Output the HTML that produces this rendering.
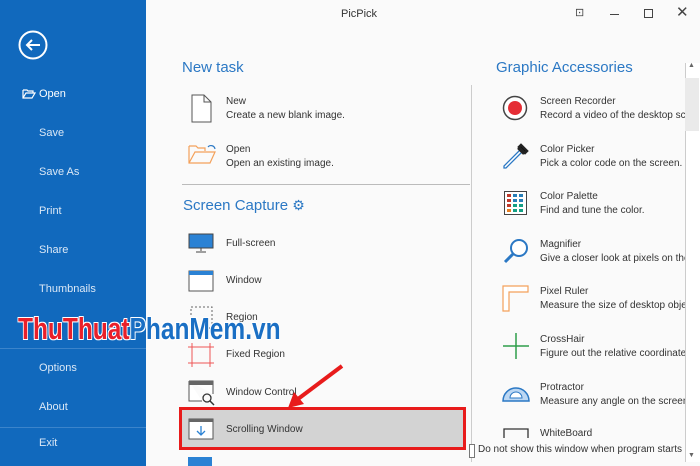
<!DOCTYPE html><html><head><style>
body{margin:0;width:700px;height:466px;overflow:hidden;background:#fafafa;font-family:"Liberation Sans",sans-serif;position:relative}
.a{position:absolute;white-space:nowrap}
.sb{left:0;top:0;width:146px;height:466px;background:#1169bd}
.si{color:#dbe8f6;font-size:11px}
.h{color:#2b78c4;font-size:15px}
.t{font-size:10px;color:#333;line-height:14px}
</style></head><body>
<div class="a sb"></div>
<svg class="a" style="left:18px;top:30px" width="30" height="30"><circle cx="15" cy="15" r="13.5" fill="none" stroke="#fff" stroke-width="2"/><path d="M22 15H9M14 10L9 15L14 20" fill="none" stroke="#fff" stroke-width="2"/></svg>
<svg class="a" style="left:22px;top:88px" width="14" height="11"><path d="M1 2H5L6 3H11V5M1 2V10H10L13 5H4L1 10" fill="none" stroke="#fff" stroke-width="1.2"/></svg>
<div class="a si" style="left:39px;top:88px;color:#fff">Open</div>
<div class="a si" style="left:39px;top:127px">Save</div>
<div class="a si" style="left:39px;top:166px">Save As</div>
<div class="a si" style="left:39px;top:205px">Print</div>
<div class="a si" style="left:39px;top:244px">Share</div>
<div class="a si" style="left:39px;top:283px">Thumbnails</div>
<div class="a" style="left:0;top:348px;width:146px;height:1px;background:#3b84cb"></div>
<div class="a si" style="left:39px;top:362px">Options</div>
<div class="a si" style="left:39px;top:401px">About</div>
<div class="a" style="left:0;top:427px;width:146px;height:1px;background:#3b84cb"></div>
<div class="a si" style="left:39px;top:437px">Exit</div>
<div class="a" style="left:341px;top:8px;font-size:11px;color:#333">PicPick</div>
<div class="a" style="left:575px;top:6px;font-size:11px;color:#444">⊡</div>
<div class="a" style="left:610px;top:14px;width:9px;height:1px;background:#444"></div>
<div class="a" style="left:644px;top:9px;width:7px;height:7px;border:1px solid #444"></div>
<div class="a" style="left:676px;top:3px;font-size:15px;color:#444">✕</div>
<div class="a h" style="left:182px;top:59px">New task</div>
<div class="a h" style="left:183px;top:197px">Screen Capture <span style="font-size:14px">⚙</span></div>
<div class="a h" style="left:496px;top:59px">Graphic Accessories</div>
<svg class="a" style="left:190px;top:94px" width="24" height="30"><path d="M2 1H14L21 8V28H2Z M14 1V8H21" fill="#fff" stroke="#555"/></svg>
<div class="a t" style="left:226px;top:95px">New<br>Create a new blank image.</div>
<svg class="a" style="left:188px;top:143px" width="30" height="22"><path d="M1 3H8L10 5H17V8M1 3V20H22L27 9H7L1 20" fill="none" stroke="#f4a15a" stroke-width="1.2"/><path d="M20 4A4 4 0 0 1 27 6" fill="none" stroke="#2b78c4" stroke-width="1.2"/></svg>
<div class="a t" style="left:226px;top:143px">Open<br>Open an existing image.</div>
<div class="a" style="left:182px;top:184px;width:288px;height:1px;background:#bbb"></div>
<div class="a" style="left:471px;top:85px;width:1px;height:377px;background:#ccc"></div>
<svg class="a" style="left:188px;top:233px" width="26" height="20"><rect x="1" y="1" width="24" height="14" fill="#2b82d4" stroke="#444"/><path d="M13 15V18M8 19H18" stroke="#444"/></svg>
<div class="a t" style="left:226px;top:237px">Full-screen</div>
<svg class="a" style="left:188px;top:270px" width="26" height="22"><rect x="1" y="1" width="24" height="20" fill="#fff" stroke="#555"/><rect x="1" y="1" width="24" height="4" fill="#2b82d4"/></svg>
<div class="a t" style="left:226px;top:274px">Window</div>
<svg class="a" style="left:190px;top:306px" width="24" height="24"><rect x="1" y="1" width="21" height="21" fill="none" stroke="#666" stroke-dasharray="2 2"/></svg>
<div class="a t" style="left:226px;top:311px">Region</div>
<svg class="a" style="left:188px;top:343px" width="26" height="24"><path d="M4 0V24M22 0V24M0 4H26M0 20H26" stroke="#e55"/></svg>
<div class="a t" style="left:226px;top:348px">Fixed Region</div>
<svg class="a" style="left:188px;top:380px" width="28" height="26"><path d="M1 1H25V14M1 1V21H14" fill="#fff" stroke="#555"/><rect x="1" y="1" width="24" height="4" fill="#666"/><circle cx="19" cy="18" r="4" fill="none" stroke="#333" stroke-width="1.3"/><path d="M22 21L26 25" stroke="#333" stroke-width="1.5"/></svg>
<div class="a t" style="left:226px;top:386px">Window Control</div>
<div class="a" style="left:179px;top:407px;width:281px;height:37px;border:3px solid #e81b1b;background:#d3d3d3"></div>
<svg class="a" style="left:188px;top:418px" width="26" height="22"><rect x="1" y="1" width="24" height="20" fill="#fff" stroke="#555"/><rect x="1" y="1" width="24" height="3" fill="#666"/><path d="M13 8V17M9 13L13 17L17 13" fill="none" stroke="#2b82d4" stroke-width="1.3"/></svg>
<div class="a t" style="left:226px;top:423px">Scrolling Window</div>
<div class="a" style="left:188px;top:457px;width:24px;height:9px;background:#2b82d4"></div>
<svg class="a" style="left:280px;top:360px" width="70" height="55"><path d="M62 6L14 42" stroke="#e81b1b" stroke-width="4"/><path d="M8 48L14 32L24 44Z" fill="#e81b1b"/></svg>
<div class="a" style="left:18px;top:311px;font-size:31px;font-weight:bold;transform:scaleX(0.79);transform-origin:0 0;text-shadow:1px 1px 0 #fff,-1px -1px 0 #fff,1px -1px 0 #fff,-1px 1px 0 #fff"><span style="color:#e8202a">ThuThuat</span><span style="color:#1a6fc4">PhanMem</span><span style="color:#1a6fc4">.vn</span></div>
<svg class="a" style="left:502px;top:95px" width="26" height="26"><circle cx="13" cy="13" r="11.5" fill="#fff" stroke="#444" stroke-width="1.5"/><circle cx="13" cy="13" r="7" fill="#e52d35"/></svg>
<div class="a t" style="left:540px;top:95px">Screen Recorder<br>Record a video of the desktop sc</div>
<svg class="a" style="left:502px;top:142px" width="28" height="28"><path d="M20 10L4 26L2 26L2 24L18 8" fill="#fff" stroke="#2b78c4" stroke-width="1.3"/><path d="M16 6L22 12M19 3L25 9L23 11L17 5Z" stroke="#222" stroke-width="2.5"/></svg>
<div class="a t" style="left:540px;top:143px">Color Picker<br>Pick a color code on the screen.</div>
<svg class="a" style="left:504px;top:191px" width="24" height="25"><rect x="0.5" y="0.5" width="22" height="23" fill="#fff" stroke="#444"/><g fill="#c0392b"><rect x="3" y="3" width="4" height="3"/><rect x="3" y="8" width="4" height="3"/><rect x="3" y="13" width="4" height="3"/><rect x="3" y="18" width="4" height="3" fill="#e67e22"/></g><g fill="#2980b9"><rect x="9" y="3" width="4" height="3"/><rect x="9" y="8" width="4" height="3"/><rect x="15" y="3" width="4" height="3"/><rect x="15" y="8" width="4" height="3"/></g><g fill="#16a085"><rect x="9" y="13" width="4" height="3"/><rect x="15" y="13" width="4" height="3"/><rect x="9" y="18" width="4" height="3"/><rect x="15" y="18" width="4" height="3"/></g></svg>
<div class="a t" style="left:540px;top:190px">Color Palette<br>Find and tune the color.</div>
<svg class="a" style="left:502px;top:237px" width="28" height="28"><circle cx="17" cy="11" r="8" fill="#fff" stroke="#2b78c4" stroke-width="2"/><path d="M11 17L3 25" stroke="#2b78c4" stroke-width="3"/></svg>
<div class="a t" style="left:540px;top:238px">Magnifier<br>Give a closer look at pixels on the</div>
<svg class="a" style="left:502px;top:285px" width="28" height="28"><path d="M1 1H26V7H7V26H1Z" fill="#fff" stroke="#f4a15a" stroke-width="1.2"/></svg>
<div class="a t" style="left:540px;top:285px">Pixel Ruler<br>Measure the size of desktop obje</div>
<svg class="a" style="left:502px;top:333px" width="28" height="28"><path d="M14 0V26M1 13H27" stroke="#2e9e4a" stroke-width="1.5"/></svg>
<div class="a t" style="left:540px;top:333px">CrossHair<br>Figure out the relative coordinate</div>
<svg class="a" style="left:502px;top:383px" width="28" height="20"><path d="M1 18A13 13 0 0 1 27 18Z" fill="#bcd7f3" stroke="#2b78c4" stroke-width="1.5"/><path d="M8 15A6 6 0 0 1 20 15Z" fill="#fff" stroke="#2b78c4"/></svg>
<div class="a t" style="left:540px;top:381px">Protractor<br>Measure any angle on the screen</div>
<svg class="a" style="left:502px;top:428px" width="28" height="10"><path d="M2 10V1H26V10" fill="none" stroke="#333" stroke-width="1.3"/></svg>
<div class="a t" style="left:540px;top:427px">WhiteBoard</div>
<div class="a" style="left:472px;top:444px;width:213px;height:18px;background:#fafafa"></div>
<div class="a" style="left:469px;top:444px;width:4px;height:12px;border:1px solid #777;background:#fff"></div>
<div class="a t" style="left:478px;top:443px">Do not show this window when program starts</div>
<div class="a" style="left:685px;top:63px;width:14px;height:399px;border-left:1px solid #ccc;background:#fff"></div>
<div class="a" style="left:685px;top:78px;width:14px;height:53px;background:#eaeaea"></div>
<div class="a" style="left:688px;top:62px;font-size:7px;color:#666">▲</div>
<div class="a" style="left:688px;top:452px;font-size:7px;color:#666">▼</div>
</body></html>
